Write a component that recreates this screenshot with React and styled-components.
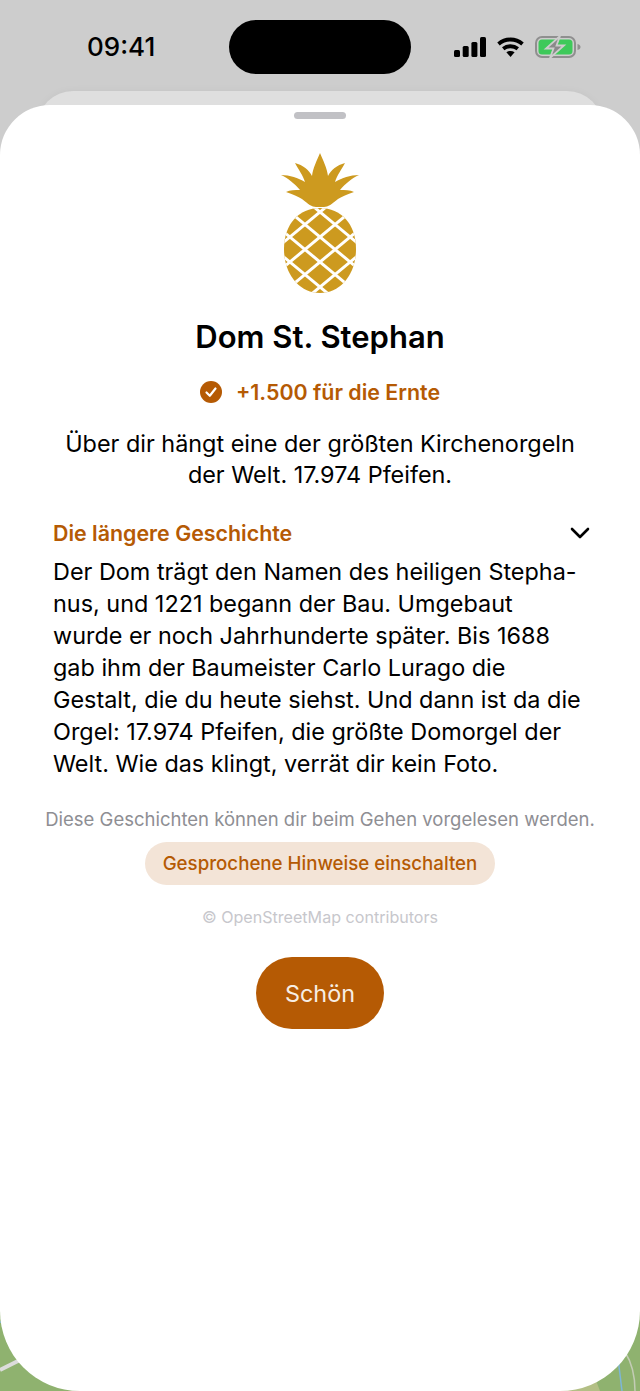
import React from 'react';
import styled, { createGlobalStyle } from 'styled-components';

const Global = createGlobalStyle`
  html, body {
    margin: 0;
    padding: 0;
    background: #fff;
  }
  #root {
    width: 640px;
    height: 1391px;
  }
`;

const Screen = styled.div`
  position: relative;
  width: 640px;
  height: 1391px;
  overflow: hidden;
  display: flex;
  flex-direction: column;
  font-family: Inter, "Liberation Sans", sans-serif;
  background: linear-gradient(#cdcdcd 0, #cdcdcd 700px, #8fb26f 700px, #8fb26f 100%);
`;

const MapLayer = styled.svg`
  position: absolute;
  left: 0;
  bottom: 0;
`;

const StatusBar = styled.div`
  position: relative;
  height: 91px;
  flex: none;
  display: grid;
  grid-template-columns: 1fr 182px 1fr;
  align-items: start;
  padding-top: 20px;
  box-sizing: border-box;
`;

const Time = styled.div`
  padding-left: 87px;
  font-size: 26px;
  font-weight: 500;
  line-height: 54px;
  color: #000;
`;

const Island = styled.div`
  height: 54px;
  border-radius: 27px;
  background: #000;
`;

const StatusIcons = styled.div`
  display: flex;
  align-items: center;
  justify-content: flex-end;
  gap: 11px;
  height: 54px;
  padding-right: 59px;
`;

const BackCard = styled.div`
  position: relative;
  flex: none;
  height: 80px;
  margin: 0 37px -66px;
  border-radius: 36px 36px 0 0;
  background: #dfdfdf;
  box-shadow: 0 0 8px rgba(0, 0, 0, 0.04);
`;

const Sheet = styled.div`
  position: relative;
  flex: 1;
  display: flex;
  flex-direction: column;
  align-items: center;
  background: #fff;
  border-radius: 50px 50px 80px 80px;
`;

const Handle = styled.div`
  width: 52px;
  height: 7px;
  margin-top: 7px;
  border-radius: 4px;
  background: #c1c1c5;
`;

const Fruit = styled.svg`
  display: block;
  margin-top: 33px;
`;

const Title = styled.h1`
  margin: 23px 0 0;
  font-size: 31px;
  line-height: 40px;
  font-weight: 600;
  color: #000;
`;

const Reward = styled.div`
  display: flex;
  align-items: center;
  gap: 14px;
  margin-top: 20px;
  font-size: 21.4px;
  line-height: 30px;
  font-weight: 600;
  color: #b55a04;
`;

const Check = styled.svg`
  display: block;
`;

const Lead = styled.p`
  margin: 21px 0 0;
  font-size: 23.4px;
  line-height: 31px;
  text-align: center;
  color: #000;
`;

const StoryHead = styled.div`
  align-self: stretch;
  display: flex;
  align-items: center;
  justify-content: space-between;
  margin-top: 28px;
  padding: 0 50px 0 53px;
  font-size: 21.4px;
  line-height: 30px;
  font-weight: 600;
  color: #b55a04;
`;

const Story = styled.div`
  align-self: stretch;
  margin-top: 8px;
  padding: 0 53px;
`;

const StoryLine = styled.div`
  font-size: 23.4px;
  line-height: 32px;
  white-space: nowrap;
  color: #000;
`;

const Hint = styled.div`
  margin-top: 26px;
  font-size: 18.5px;
  line-height: 26px;
  color: #8e8e93;
`;

const AudioButton = styled.button`
  margin-top: 10px;
  height: 43px;
  width: 350px;
  border: 0;
  border-radius: 22px;
  background: #f3e4d7;
  font-family: inherit;
  font-size: 18.7px;
  font-weight: 500;
  color: #b55a04;
`;

const Credit = styled.div`
  margin-top: 20px;
  font-size: 16.1px;
  line-height: 24px;
  color: #c7c7cc;
`;

const DoneButton = styled.button`
  margin-top: 28px;
  width: 128px;
  height: 72px;
  border: 0;
  border-radius: 36px;
  background: #b55a04;
  font-family: inherit;
  font-size: 23.4px;
  color: #f7eee4;
`;

const storyLines = [
  'Der Dom trägt den Namen des heiligen Stepha-',
  'nus, und 1221 begann der Bau. Umgebaut',
  'wurde er noch Jahrhunderte später. Bis 1688',
  'gab ihm der Baumeister Carlo Lurago die',
  'Gestalt, die du heute siehst. Und dann ist da die',
  'Orgel: 17.974 Pfeifen, die größte Domorgel der',
  'Welt. Wie das klingt, verrät dir kein Foto.',
];

// the lattice crosses on the middle axis every 25px
const latticeSteps = [-3, -2, -1, 0, 1, 2, 3, 4, 5];

const Pineapple = () => (
  <Fruit width="80" height="142" viewBox="0 0 80 142">
    <defs>
      <clipPath id="fruitBody">
        <path d="M40 56 C61 56 76 72 76 97 C76 123 60 141 40 141 C20 141 4 123 4 97 C4 72 19 56 40 56 Z" />
      </clipPath>
    </defs>
    <path
      fill="#cd9a1f"
      d="M40 1 C43 8 47 16 48 24 C51 18 57 13 65 11 C62 17 57 23 55 30 C62 26 70 23 79 23 C72 26 65 32 60 38 C65 38 70 38 74 40 C67 42 62 45 58 47 C52 52 48 55 44 55 L36 55 C32 55 28 52 22 47 C18 45 13 42 6 40 C10 38 15 38 20 38 C15 32 8 26 1 23 C10 23 18 26 25 30 C23 23 18 17 15 11 C23 13 29 18 32 24 C33 16 37 8 40 1 Z"
    />
    <g clipPath="url(#fruitBody)">
      <rect x="0" y="50" width="80" height="92" fill="#cd9a1f" />
      <g stroke="#fff" strokeWidth="3" fill="none">
        {latticeSteps.map(k => {
          const y = 60 + 25 * k;
          return (
            <React.Fragment key={k}>
              <path d={`M-10 ${y - 41.5} L90 ${y + 41.5}`} />
              <path d={`M90 ${y - 41.5} L-10 ${y + 41.5}`} />
            </React.Fragment>
          );
        })}
      </g>
    </g>
  </Fruit>
);

const Signal = () => (
  <svg width="32" height="20" viewBox="0 0 32 20">
    <rect x="0" y="13" width="6" height="7" rx="1.5" fill="#000" />
    <rect x="8.7" y="9" width="6" height="11" rx="1.5" fill="#000" />
    <rect x="17.4" y="5" width="6" height="15" rx="1.5" fill="#000" />
    <rect x="26" y="0" width="6" height="20" rx="1.5" fill="#000" />
  </svg>
);

const Wifi = () => (
  <svg width="27" height="20" viewBox="0 0 27 20">
    <g fill="none" stroke="#000" strokeWidth="3.8">
      <path d="M1.5 7 C8.5 1 18.5 1 25.5 7" />
      <path d="M6.2 11.8 C10.5 8.4 16.5 8.4 20.8 11.8" />
    </g>
    <path d="M9.4 15.2 C12 13.6 15 13.6 17.6 15.2 L13.5 20 Z" fill="#000" />
  </svg>
);

const Battery = () => (
  <svg width="46" height="22" viewBox="0 0 46 22">
    <rect x="1" y="1" width="39" height="20" rx="6" fill="none" stroke="#8f8f8f" strokeWidth="2" />
    <rect x="3.5" y="3.5" width="34" height="15" rx="3.5" fill="#3ec95a" />
    <path d="M42.5 8 C44.5 8.5 45.5 9.5 45.5 11 C45.5 12.5 44.5 13.5 42.5 14 Z" fill="#8f8f8f" />
    <path d="M25 0 L11 12.5 H18.5 L15 22 L29 9.5 H21.5 Z" fill="#8a8a8a" stroke="#cdcdcd" strokeWidth="1.8" />
  </svg>
);

const App = () => (
  <Screen>
    <Global />
    <MapLayer width="640" height="140" viewBox="0 0 640 140">
      <path d="M0 119 L28 105" stroke="#dcdcdc" strokeWidth="4" fill="none" />
      <path d="M0 71 L6 72" stroke="#7db6d8" strokeWidth="1.5" fill="none" />
      <path d="M595 127 L600 140 L545 140 L560 130 Z" fill="#b3bf85" />
      <path d="M625 101 C632 112 635 126 635 140" stroke="#c3ccb5" strokeWidth="1.5" fill="none" />
      <path d="M618 107 L622 140" stroke="#7db6d8" strokeWidth="1.5" fill="none" />
    </MapLayer>
    <StatusBar>
      <Time>09:41</Time>
      <Island />
      <StatusIcons>
        <Signal />
        <Wifi />
        <Battery />
      </StatusIcons>
    </StatusBar>
    <BackCard />
    <Sheet>
      <Handle />
      <Pineapple />
      <Title>Dom St. Stephan</Title>
      <Reward>
        <Check width="22" height="22" viewBox="0 0 22 22">
          <circle cx="11" cy="11" r="11" fill="#b55a04" />
          <path d="M6.5 11.5 L9.8 14.8 L15.5 7.5" fill="none" stroke="#fff" strokeWidth="2.2" strokeLinecap="round" strokeLinejoin="round" />
        </Check>
        +1.500 für die Ernte
      </Reward>
      <Lead>
        Über dir hängt eine der größten Kirchenorgeln
        <br />
        der Welt. 17.974 Pfeifen.
      </Lead>
      <StoryHead>
        Die längere Geschichte
        <svg width="20" height="12" viewBox="0 0 20 12">
          <path d="M2 2 L10 10 L18 2" fill="none" stroke="#000" strokeWidth="2.6" strokeLinecap="round" strokeLinejoin="round" />
        </svg>
      </StoryHead>
      <Story>
        {storyLines.map(line => (
          <StoryLine key={line}>{line}</StoryLine>
        ))}
      </Story>
      <Hint>Diese Geschichten können dir beim Gehen vorgelesen werden.</Hint>
      <AudioButton>Gesprochene Hinweise einschalten</AudioButton>
      <Credit>© OpenStreetMap contributors</Credit>
      <DoneButton>Schön</DoneButton>
    </Sheet>
  </Screen>
);

export default App;
